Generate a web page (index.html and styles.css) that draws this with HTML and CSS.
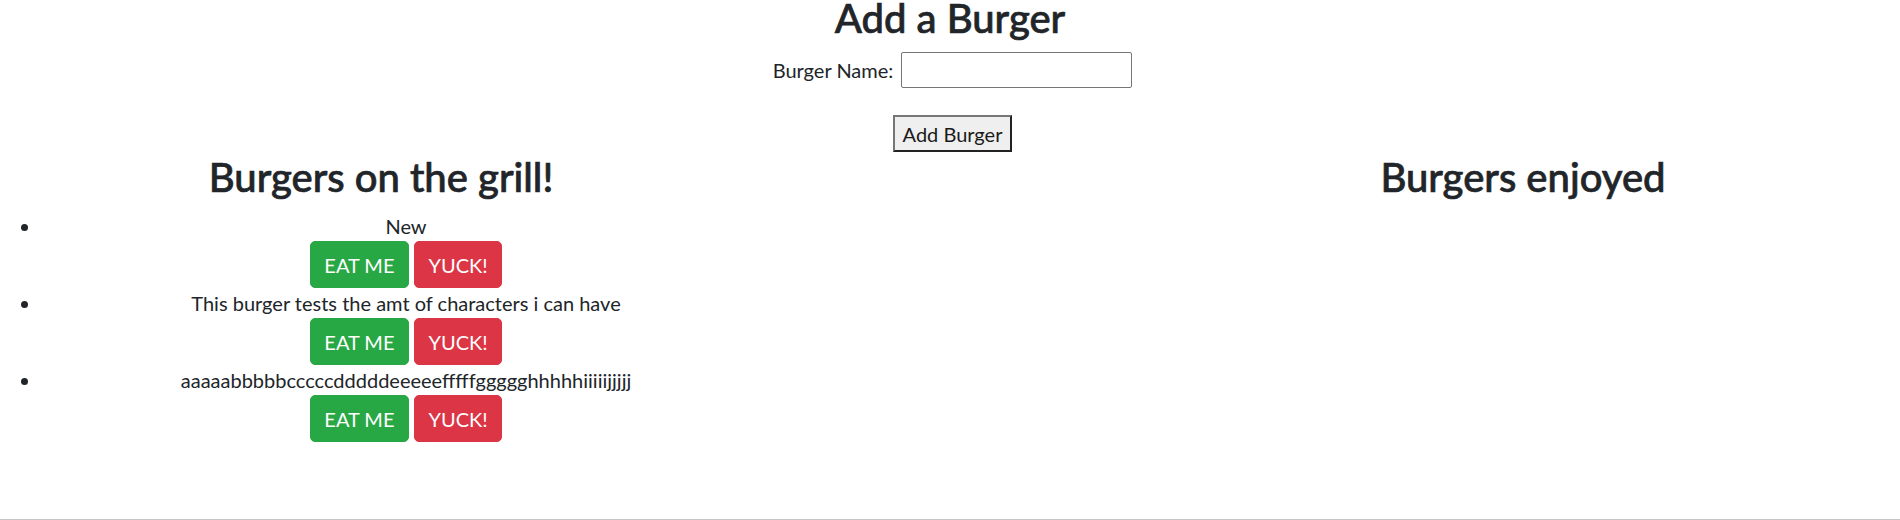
FILE: index.html
```html
<!DOCTYPE html>
<html lang="en">
<head>
<meta charset="utf-8">
<title>Burger Logger</title>
<link rel="stylesheet" href="styles.css">
</head>
<body>
<div class="page">
  <h2 class="title">Add a Burger</h2>
  <form class="add-form">
    <div class="field">
      <label class="field-label" for="burger">Burger Name:</label>
      <input class="field-input" id="burger" type="text">
    </div>
    <div class="submit-row">
      <button class="submit-btn" type="button">Add Burger</button>
    </div>
  </form>
  <div class="columns">
    <div class="col col-left">
      <h2 class="col-title">Burgers on the grill!</h2>
      <ul class="burger-list">
        <li class="burger">
          <div class="burger-body">
            <div class="burger-name">New</div>
            <div class="burger-actions">
              <button class="btn btn-eat" type="button">EAT ME</button>
              <button class="btn btn-yuck" type="button">YUCK!</button>
            </div>
          </div>
        </li>
        <li class="burger">
          <div class="burger-body">
            <div class="burger-name">This burger tests the amt of characters i can have</div>
            <div class="burger-actions">
              <button class="btn btn-eat" type="button">EAT ME</button>
              <button class="btn btn-yuck" type="button">YUCK!</button>
            </div>
          </div>
        </li>
        <li class="burger">
          <div class="burger-body">
            <div class="burger-name">aaaaabbbbbcccccdddddeeeeefffffggggghhhhhiiiiijjjjj</div>
            <div class="burger-actions">
              <button class="btn btn-eat" type="button">EAT ME</button>
              <button class="btn btn-yuck" type="button">YUCK!</button>
            </div>
          </div>
        </li>
      </ul>
    </div>
    <div class="col col-right">
      <h2 class="col-title">Burgers enjoyed</h2>
    </div>
  </div>
</div>
</body>
</html>
```
FILE: styles.css
```css
*{box-sizing:border-box}
html,body{margin:0;padding:0;background:#fff}
body{font-family:Lato,"Liberation Sans",sans-serif;font-size:20px;line-height:30px;color:#212529;text-align:center}
.page{height:520px;border-bottom:1px solid #c4c4c4;overflow:hidden}
.title{margin:0;font-size:40px;line-height:36px;font-weight:500;color:#212529;-webkit-text-stroke:0.7px #212529}
.add-form{margin:16px 0 0}
.field{display:flex;justify-content:center;align-items:center;gap:8px;padding-left:5px}
.field-label{display:block}
.field-input{width:231px;height:36px;border:1px solid #767676;border-radius:2px;background:#fff;margin:0;padding:1px 2px}
.submit-row{display:flex;justify-content:center;margin-top:27px;padding-left:5px}
.submit-btn{width:119px;height:37px;margin:0;padding:0;font-family:Lato,"Liberation Sans",sans-serif;font-size:20px;line-height:30px;color:#1a1a1a;background:#efefef;border:2px solid;border-color:#767676 #222 #222 #767676;border-radius:0}
.columns{display:flex;justify-content:space-between;margin-top:1px}
.col-left{width:762px}
.col-right{width:754px}
.col-title{margin:0 0 10px;font-size:40px;line-height:48px;font-weight:500;color:#212529;-webkit-text-stroke:0.7px #212529}
.burger-list{list-style:none;margin:0;padding:0}
.burger{display:flex;align-items:flex-start}
.burger::before{content:"";flex:none;width:7px;height:7px;border-radius:50%;background:#212529;margin:13px 22px 0 21px}
.burger-body{flex:1;text-align:center}
.burger-name{line-height:30px;white-space:nowrap}
.burger-actions{display:flex;justify-content:center;gap:5px}
.btn{margin:0;font-family:Lato,"Liberation Sans",sans-serif;font-size:20px;line-height:30px;padding:7.5px 13.5px;border:1px solid transparent;border-radius:5px;color:#fff}
.btn-eat{background:#28a745;border-color:#28a745}
.btn-yuck{background:#dc3545;border-color:#dc3545}
```
